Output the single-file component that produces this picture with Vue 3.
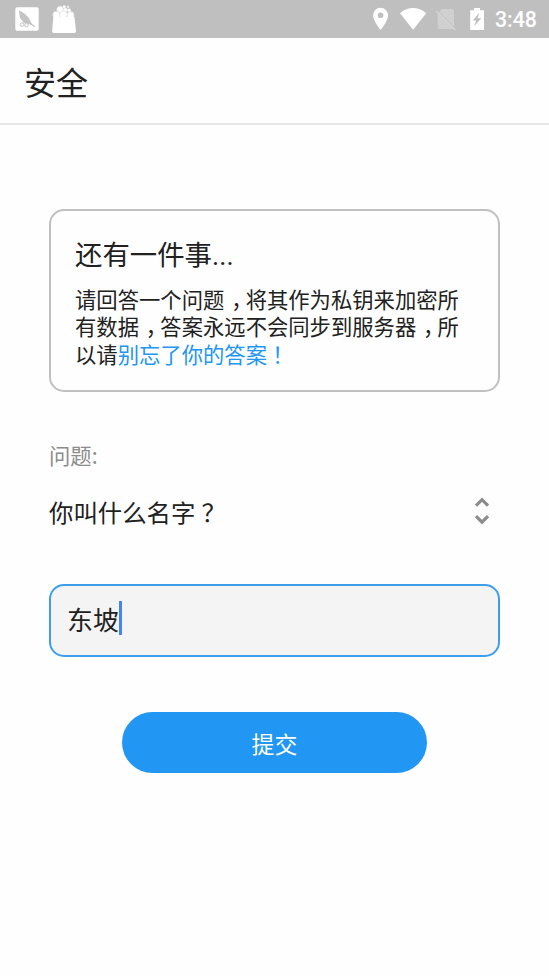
<script setup>
import { ref } from 'vue'

const answer = ref('东坡')
</script>

<template>
  <div class="screen">
    <header class="status">
      <div class="group">
        <svg class="feather" viewBox="0 0 24 24">
          <rect x="0.3" y="0.3" width="23.4" height="23.4" rx="1.8" fill="#fff" />
          <path d="M3.8 3.2 9.5 6.5 13.5 10.5 17.5 18 9 16 5 11Z" fill="#c4c4c4" />
          <path d="M13 15 19.8 19.8" stroke="#c4c4c4" stroke-width="1.2" />
          <g fill="#f4f4f4" stroke="#c4c4c4" stroke-width="0.9">
            <circle cx="7" cy="17.6" r="1.9" />
            <circle cx="11.5" cy="18" r="1.9" />
          </g>
        </svg>
        <svg class="bag" viewBox="0 0 26 29">
          <g fill="#fff" stroke="#d8d8d8" stroke-width="0.5">
            <circle cx="9" cy="4.5" r="3.2" />
            <circle cx="14.2" cy="5" r="2.2" />
            <circle cx="18" cy="5.3" r="1.9" />
            <circle cx="13.2" cy="1.7" r="1.5" />
            <circle cx="17" cy="1.9" r="1.1" />
            <circle cx="5.4" cy="9.8" r="3.6" />
            <circle cx="19.6" cy="10" r="3.5" />
            <circle cx="12.4" cy="9.6" r="3.9" />
          </g>
          <path d="M2.4 11.8H23.4L25 26Q25.2 28 23.3 28H2.7Q.9 28 1.1 26Z" fill="#fff" />
        </svg>
      </div>
      <svg class="system" viewBox="0 0 130 38">
        <path d="M20.6 7.8a7.5 7.5 0 0 0-7.5 7.5C13.1 21 20.6 30 20.6 30S28.1 21 28.1 15.3a7.5 7.5 0 0 0-7.5-7.5Zm0 10.3a2.8 2.8 0 1 1 0-5.6 2.8 2.8 0 0 1 0 5.6Z" fill="#fff" />
        <path d="M40 13.2Q53 3 66.2 13.2L53.1 29.8Z" fill="#fff" />
        <path d="M82 9H92Q94 9 94 11V27Q94 29 92 29H79.7Q77.7 29 77.7 27V13.5Z" fill="#d0d0d0" />
        <path d="M77.6 10.8 95.8 29" stroke="#bfbfbf" stroke-width="1" />
        <path d="M76.2 11 95.3 30" stroke="#d3d3d3" stroke-width="1.6" />
        <path d="M110.2 10.3H114.1V8H120V10.3H124V30H110.2Z" fill="#fff" />
        <path d="M119.3 12.5 112.8 20.5H116.2L114 26.5 121.3 18.3H117.6Z" fill="#bfbfbf" />
      </svg>
      <span class="clock">3:48</span>
    </header>

    <h1 class="title">安全</h1>

    <main class="content">
      <section class="notice">
        <h2>还有一件事<span class="dots">...</span></h2>
        <p>请回答一个问题<span class="punct">，</span>将其作为私钥来加密所<br />有数据<span class="punct">，</span>答案永远不会同步到服务器<span class="punct">，</span>所<br />以请<em>别忘了你的答案<span class="punct mark">！</span></em></p>
      </section>

      <div class="label">问题:</div>
      <div class="select">
        <span>你叫什么名字<span class="punct mark">？</span></span>
        <svg viewBox="0 0 16 30">
          <path d="M2 9.7 8 3.7 14 9.7M2 20.2 8 26.2 14 20.2" fill="none" stroke="#8c8c8c" stroke-width="3.2" />
        </svg>
      </div>

      <div class="field"><span>{{ answer }}</span><i class="caret"></i></div>
      <button class="submit" type="button">提交</button>
    </main>
  </div>
</template>

<style>
body {
  background: #fff;
}
</style>

<style scoped>
.screen {
  box-sizing: border-box;
  height: 976px;
  overflow: hidden;
  background: #fefefe;
  color: #212121;
  font-family: "Noto Sans CJK SC", sans-serif;
}
.status {
  display: flex;
  align-items: flex-start;
  height: 38px;
  background: #bfbfbf;
}
.group {
  display: flex;
  flex: 1;
  gap: 12px;
  padding-left: 15px;
}
.feather {
  width: 24px;
  height: 24px;
  margin-top: 7px;
}
.bag {
  width: 26px;
  height: 29px;
  margin-top: 5px;
}
.system {
  width: 130px;
  height: 38px;
}
.clock {
  width: 59px;
  padding-left: 5px;
  box-sizing: border-box;
  color: #fff;
  font: 500 21.3px/40px Roboto, sans-serif;
}
.title {
  box-sizing: border-box;
  height: 87px;
  margin: 0;
  padding-left: 24px;
  border-bottom: 2px solid #e6e6e6;
  font-size: 32px;
  font-weight: 400;
  line-height: 86px;
}
.content {
  display: flex;
  flex-direction: column;
  padding: 84px 49px 0;
}
.notice {
  box-sizing: border-box;
  height: 183px;
  padding: 22px 0 0 24px;
  border: 2px solid #c0c0c0;
  border-radius: 15px;
  white-space: nowrap;
}
h2 {
  margin: 0;
  font-size: 27.4px;
  font-weight: 400;
  line-height: 40px;
}
.dots {
  font-family: Roboto, sans-serif;
}
p {
  margin: 9px 0 0;
  font-size: 21.33px;
  line-height: 27.4px;
}
em {
  color: #2196f3;
  font-style: normal;
}
.punct {
  margin: 0 0.18em 0 0.32em;
  font-feature-settings: "halt";
}
.mark {
  margin: 0 0.25em;
}
.label {
  margin-top: 47px;
  color: #8c8c8c;
  font-size: 21.33px;
  line-height: 32px;
}
.select {
  display: flex;
  align-items: center;
  justify-content: space-between;
  height: 40px;
  margin-top: 20px;
  padding-right: 10px;
  font-size: 24.4px;
}
.select svg {
  width: 16px;
  height: 30px;
}
.field {
  display: flex;
  align-items: center;
  box-sizing: border-box;
  height: 73px;
  margin-top: 53px;
  padding: 0 0 5px 16px;
  border: 2px solid #3c9fee;
  border-radius: 15px;
  background: #f4f4f4;
  font-size: 25.9px;
}
.caret {
  width: 3px;
  height: 34px;
  background: #4285f4;
}
.submit {
  align-self: center;
  width: 305px;
  height: 61px;
  margin-top: 55px;
  padding: 2px 0 0;
  border: 0;
  border-radius: 31px;
  background: #2196f3;
  color: #fff;
  font: 400 22.9px/1.4 "Noto Sans CJK SC", sans-serif;
}
</style>
